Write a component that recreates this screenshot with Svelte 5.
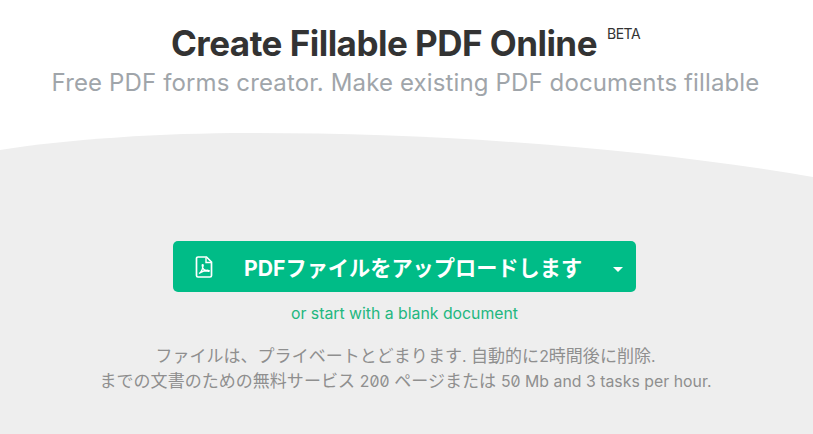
<script>
  const title = 'Create Fillable PDF Online';
  const subtitle = 'Free PDF forms creator. Make existing PDF documents fillable';
</script>

<div class="page">
  <header class="top">
    <h1>{title}<sup>BETA</sup></h1>
    <p class="sub">{subtitle}</p>
  </header>

  <section class="band">
    <svg class="curve" viewBox="0 0 813 60" width="813" height="60" aria-hidden="true">
      <path d="M0 17 C 70 6 160 0 250 0 C 450 0 650 16 813 44 V60 H0 Z" fill="#eeeeee" />
    </svg>

    <div class="upload">
      <button class="btn" type="button">
        <svg class="pdf" viewBox="0 0 18 22" width="18" height="22" aria-hidden="true">
          <path d="M1.500 2.500a1.500 1.500 0 0 1 1.500-1.500h8.500l5 5v13.500a1.500 1.500 0 0 1-1.500 1.500H3a1.500 1.500 0 0 1-1.500-1.500z" fill="none" stroke="#fff" stroke-width="1.700" />
          <path d="M11 1.500V6.500h5.500" fill="none" stroke="#fff" stroke-width="1.400" />
          <path d="M4 17.500c2-1 3.500-4 4.200-8 .2-1.200-1-1.300-1-.2 0 3 2.500 5.500 6.300 6 1 .1 1-1 0-1-2.500-.2-6 1-9.500 3.200z" fill="none" stroke="#fff" stroke-width="1.300" />
        </svg>
        <span class="label">PDFファイルをアップロードします</span>
        <span class="caret"></span>
      </button>
      <a class="blank" href="#blank">or start with a blank document</a>
      <p class="note">
        ファイルは、プライベートとどまります<span class="lat">.&nbsp;</span>自動的に<span class="lat">2</span>時間後に削除<span class="lat">.</span><br />
        までの文書のための無料サービス <span class="lat">200</span> ページまたは <span class="lat">50 Mb and 3 tasks per hour.</span>
      </p>
    </div>
  </section>
</div>

<style>
  :global(body) {
    margin: 0;
    background: #fff;
  }

  .page {
    width: 813px;
    height: 434px;
    overflow: hidden;
    font-family: Inter, "Noto Sans CJK JP", sans-serif;
    display: flex;
    flex-direction: column;
  }

  .top {
    height: 133px;
    text-align: center;
    padding-top: 22px;
    box-sizing: border-box;
  }

  h1 {
    margin: 0 2px 0 0;
    font-size: 35px;
    line-height: 42px;
    font-weight: 700;
    color: #333;
    letter-spacing: -0.52px;
  }

  sup {
    font-size: 14px;
    font-weight: 400;
    letter-spacing: -0.5px;
    margin-left: 10px;
    vertical-align: 17px;
    line-height: 0;
  }

  .sub {
    margin: 0 2px 0 0;
    font-size: 24px;
    line-height: 38px;
    letter-spacing: 0.13px;
    color: #a0a5aa;
  }

  .band {
    flex: 1;
    position: relative;
    background: linear-gradient(#fff 60px, #eeeeee 60px);
  }

  .curve {
    position: absolute;
    top: 0;
    left: 0;
    display: block;
  }

  .upload {
    position: relative;
    display: flex;
    flex-direction: column;
    align-items: center;
    padding-top: 108px;
  }

  .btn {
    width: 463px;
    height: 51px;
    margin-right: 4px;
    border: 0;
    border-radius: 5px;
    background: #00bc87;
    color: #fff;
    font: inherit;
    display: flex;
    align-items: center;
    padding: 0 13px 0 22px;
    box-sizing: border-box;
  }

  .pdf {
    flex: none;
  }

  .label {
    flex: 1;
    text-align: left;
    margin-left: 31px;
    font-size: 21.200px;
    font-weight: 700;
    white-space: nowrap;
  }

  .caret {
    width: 0;
    height: 0;
    margin-top: 5px;
    border-left: 5px solid transparent;
    border-right: 5px solid transparent;
    border-top: 5px solid #fff;
  }

  .blank {
    margin: 12px 4px 0 0;
    font-size: 15.800px;
    line-height: 20px;
    color: #22b77f;
    text-decoration: none;
  }

  .note {
    margin: 20px 2px 0 0;
    font-size: 17px;
    line-height: 25px;
    letter-spacing: 0.03px;
    color: #8f8f8f;
    text-align: center;
  }

  .lat {
    font-size: 15.800px;
    font-feature-settings: "zero";
  }
</style>
